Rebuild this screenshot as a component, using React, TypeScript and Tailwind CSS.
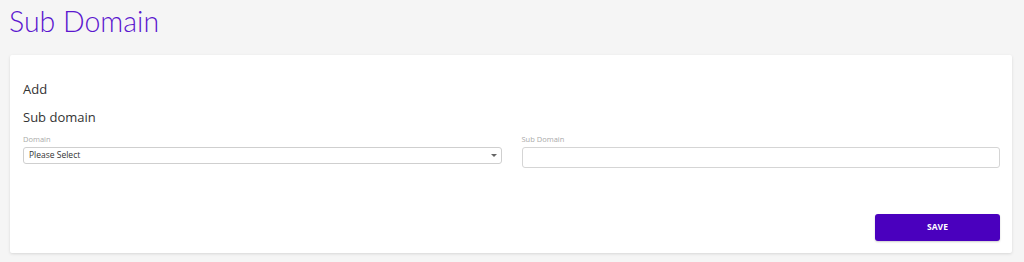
export default function App() {
  return (
    <main className="h-[262px] w-[1024px] overflow-hidden bg-[#f5f5f5] font-['Open_Sans',sans-serif]">
      <h1 className="pl-[9px] pt-[3px] font-['Lato',sans-serif] text-[28.5px] font-light leading-[36px] text-[#5b16cf]">
        Sub Domain
      </h1>
      <section className="ml-[10px] mt-[16px] h-[198px] w-[1002px] rounded-[2px] bg-white pl-[13px] pr-[12px] pt-[25px] shadow-[0_1px_3px_rgba(0,0,0,0.12)]">
        <h2 className="text-[13px] leading-[18px] text-[#333]">Add</h2>
        <h3 className="mt-[10px] text-[13px] leading-[18px] text-[#333]">Sub domain</h3>
        <div className="mt-[7px] grid grid-cols-2 gap-x-[20px]">
          <div>
            <label className="block text-[7.5px] leading-[12px] text-[#aaa]">Domain</label>
            <div className="mt-[2px] flex h-[17px] items-center justify-between rounded-[3px] border border-[#cfcfcf] pl-[5px] pr-[4px] text-[8.5px] text-[#333]">
              <span>Please Select</span>
              <span className="h-0 w-0 border-x-[3px] border-t-[3px] border-x-transparent border-t-[#666]" />
            </div>
          </div>
          <div>
            <label className="block text-[7.5px] leading-[12px] text-[#aaa]">Sub Domain</label>
            <input className="mt-[2px] block h-[21px] w-full rounded-[3px] border border-[#d5d5d5] px-[5px] text-[9px] outline-none" />
          </div>
        </div>
        <div className="mt-[46px] flex justify-end">
          <button className="h-[27px] w-[125px] rounded-[3px] bg-[#4a00be] text-[8.5px] font-bold text-white shadow-[0_1px_2px_rgba(0,0,0,0.2)]">
            SAVE
          </button>
        </div>
      </section>
    </main>
  )
}
